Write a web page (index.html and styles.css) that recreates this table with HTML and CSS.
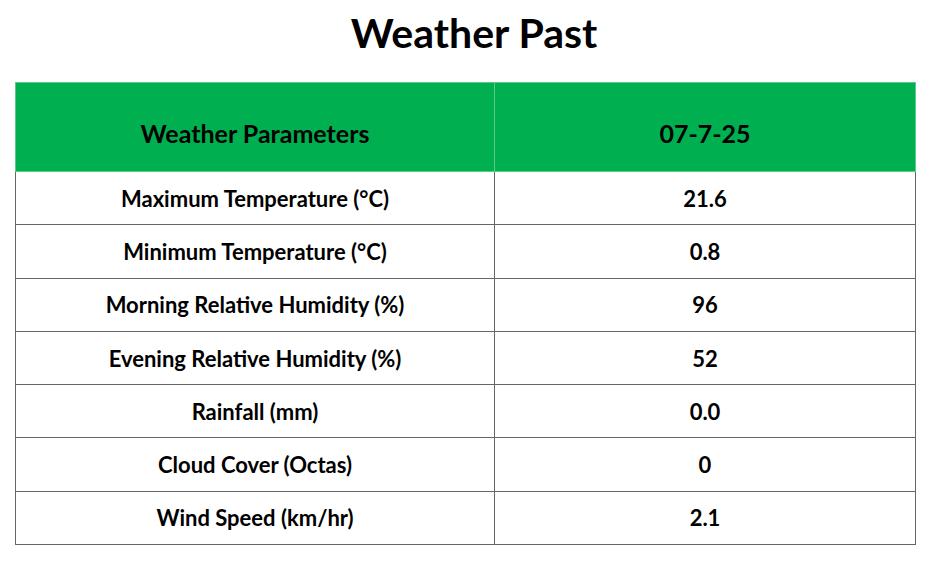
FILE: index.html
```html
<!DOCTYPE html>
<html>
<head>
<meta charset="utf-8">
<link rel="stylesheet" href="styles.css">
</head>
<body>
<h1 class="title">Weather Past</h1>
<table class="wx">
  <thead>
    <tr><th>Weather Parameters</th><th>07-7-25</th></tr>
  </thead>
  <tbody>
    <tr><td>Maximum Temperature (°C)</td><td>21.6</td></tr>
    <tr><td>Minimum Temperature (°C)</td><td>0.8</td></tr>
    <tr><td>Morning Relative Humidity (%)</td><td>96</td></tr>
    <tr><td>Evening Relative Humidity (%)</td><td>52</td></tr>
    <tr><td>Rainfall (mm)</td><td>0.0</td></tr>
    <tr><td>Cloud Cover (Octas)</td><td>0</td></tr>
    <tr><td>Wind Speed (km/hr)</td><td>2.1</td></tr>
  </tbody>
</table>
</body>
</html>
```
FILE: styles.css
```css
html, body {
  margin: 0;
  padding: 0;
  background: #ffffff;
  font-family: Lato, "Open Sans", sans-serif;
  color: #000;
}
.title {
  margin: 0;
  height: 82px;
  line-height: 66px;
  padding-left: 18px;
  text-align: center;
  font-size: 41px;
  font-weight: 700;
}
.wx {
  margin-left: 15px;
  width: 901px;
  border-collapse: collapse;
  table-layout: fixed;
}
.wx th, .wx td {
  text-align: center;
  font-weight: 700;
  padding: 0;
}
.wx th {
  background: #00b050;
  height: 77px;
  padding-top: 11px;
  font-size: 25px;
  border: 1px solid #5ccb86;
}
.wx th:first-child, .wx td:first-child { width: 478px; }
.wx td {
  height: 52.3px;
  font-size: 22px;
  border: 1px solid #666666;
}
```
